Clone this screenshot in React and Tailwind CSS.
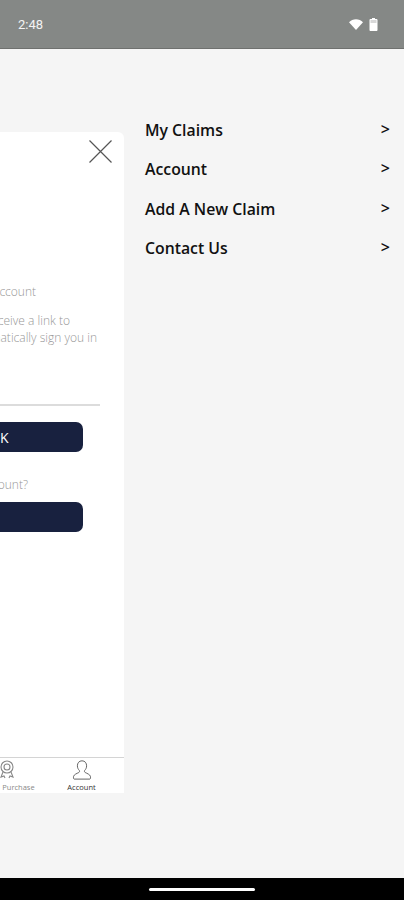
import React from "react";

const font = { fontFamily: '"Open Sans", sans-serif' };

function Row({ label }) {
  return (
    <div className="flex h-[39.3px] items-center justify-between pl-[145px] pr-[14px]">
      <span className="text-[15.8px] font-semibold leading-[22px] text-[#111111]">{label}</span>
      <span className="mb-[2px] text-[16px] font-semibold leading-[22px] text-[#111111]">&gt;</span>
    </div>
  );
}

export default function App() {
  return (
    <div className="relative flex h-[900px] w-[404px] flex-col overflow-hidden bg-[#f5f5f5]" style={font}>
      <header className="flex h-[49px] shrink-0 items-center justify-between border-b border-[#6f716f] bg-[#858886] pl-[18px] pr-[26px]">
        <span className="text-[13px] font-normal leading-none text-[#f4f4f4]" style={{ fontFamily: "Roboto, sans-serif" }}>2:48</span>
        <div className="flex items-center gap-[6px]">
          <svg width="14" height="11" viewBox="0 0 14 11"><path d="M0 3.2C1.900 1.300 4.300.2 7 .2s5.100 1.100 7 3L7 11z" fill="#fff" /></svg>
          <svg width="9" height="13" viewBox="0 0 9 13"><path d="M3 0h3v1h1.600c.5 0 .9.4.9.9V12c0 .5-.4 1-.9 1H1.400c-.5 0-.9-.5-.9-1V1.900C.5 1.400.9 1 1.400 1H3z" fill="#fff" /><rect x="1.500" y="2" width="6" height="3" fill="#d8d8d8" /></svg>
        </div>
      </header>

      <main className="flex min-h-0 flex-1">
        <section className="relative mt-[83px] flex h-[661px] w-[124px] shrink-0 flex-col overflow-hidden rounded-tr-[6px] bg-white">
          <div className="flex h-[36px] shrink-0 items-start justify-end pr-[12px] pt-[8px]">
            <svg width="23" height="23" viewBox="0 0 23 23" fill="none" stroke="#555" strokeWidth="1.2">
              <path d="M.5.5l22 22M22.500.5l-22 22" />
            </svg>
          </div>
          <div className="ml-[-276px] flex w-[400px] flex-1 flex-col items-end text-[12px] font-light leading-[17px] text-[#979797]">
            <p className="mt-[115px] mr-[88px] whitespace-nowrap">Sign in to your account</p>
            <p className="mt-[12px] mr-[54px] whitespace-nowrap">You will receive a link to</p>
            <p className="mr-[27px] whitespace-nowrap">that will automatically sign you in</p>
            <div className="mt-[58px] mr-[24px] h-[2px] w-[320px] bg-[#dcdcdc]" />
            <button className="mt-[16px] mr-[41px] flex h-[30px] w-[300px] items-center justify-end rounded-[7px] bg-[#18213f] pr-[74px] text-[14px] font-normal tracking-wide text-white">
              <span>SEND MAGIC LINK</span>
            </button>
            <p className="mt-[24px] mr-[96px] whitespace-nowrap">Don't have an account?</p>
            <button className="mt-[9px] mr-[41px] h-[30px] w-[300px] rounded-[7px] bg-[#18213f]" />
            <div className="flex-1" />
            <nav className="flex h-[36px] w-[400px] border-t border-[#d4d4d4]">
              <div className="flex-1" />
              <div className="mr-[-2px] flex w-[77px] flex-col items-center">
                <svg width="18" height="19" viewBox="0 0 18 19" className="mt-[2px]" fill="none" stroke="#888" strokeWidth="1.100">
                  <circle cx="9" cy="7" r="6" />
                  <circle cx="9" cy="7" r="3" />
                  <path d="M5 12l-2 5 3-1 1 2M13 12l2 5-3-1-1 2" />
                </svg>
                <span className="mt-[4px] ml-[24px] text-[7.500px] font-normal leading-[9px] text-[#8a8a8a]">Purchase</span>
              </div>
              <div className="mr-[3px] flex w-[77px] flex-col items-center">
                <svg width="20" height="20" viewBox="0 0 20 20" className="mt-[2px]" fill="none" stroke="#666" strokeWidth="1">
                  <path d="M10 .8c-3 0-4.600 2.300-4.600 5 0 2 .8 3.500 1.900 4.600.5.6.3 1.700-.5 2.100-2 1-4.700 2-5.200 3.800-.3 1-.1 2.800.6 2.800h15.600c.7 0 .9-1.800.6-2.800-.5-1.800-3.200-2.800-5.200-3.800-.8-.4-1-1.500-.5-2.100 1.100-1.100 1.900-2.600 1.900-4.600 0-2.700-1.600-5-4.600-5z" />
                </svg>
                <span className="mt-[3px] text-[7.500px] font-normal leading-[9px] text-[#333]">Account</span>
              </div>
              <div className="w-[1px]" />
            </nav>
          </div>
        </section>

        <div className="ml-[-124px] mt-[61.400px] flex w-[404px] flex-col self-start">
          <Row label="My Claims" />
          <Row label="Account" />
          <Row label="Add A New Claim" />
          <Row label="Contact Us" />
        </div>
      </main>

      <footer className="flex h-[22px] shrink-0 items-center justify-center bg-black">
        <div className="h-[3px] w-[106px] rounded-full bg-white" />
      </footer>
    </div>
  );
}
